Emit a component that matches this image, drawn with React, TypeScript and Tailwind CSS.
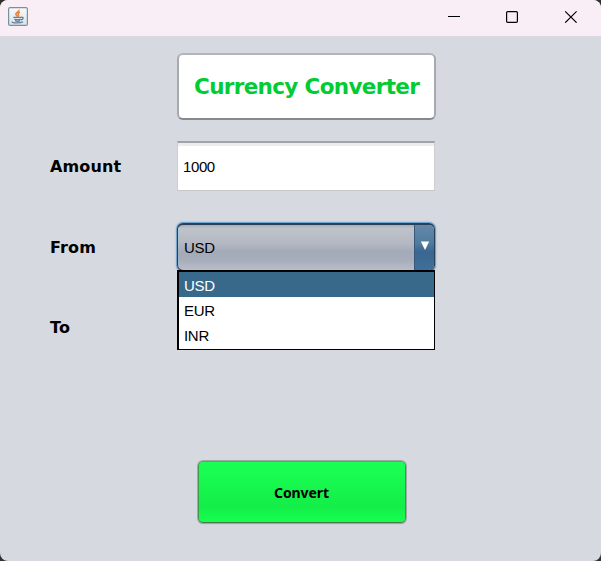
import React from "react";

const currencies = ["USD", "EUR", "INR"];

function JavaIcon() {
  return (
    <svg width="20" height="19" viewBox="0 0 20 19" className="block">
      <defs>
        <linearGradient id="tile" x1="0" y1="0" x2="0" y2="1">
          <stop offset="0" stopColor="#f8fafb" />
          <stop offset="1" stopColor="#dde2e5" />
        </linearGradient>
      </defs>
      <rect x="0.6" y="0.6" width="18.8" height="17.8" rx="1.5" fill="url(#tile)" stroke="#7591a2" strokeWidth="1.2" />
      <path d="M11 2.8c.6 2-3.6 2.6-3.2 4.6.2.9 1.6 1.5 1.9 2.3M12.1 5.3c-2 .8-2.6 1.5-1.7 2.5.5.6.1 1.2-.5 1.8" fill="none" stroke="#ec8137" strokeWidth="1.5" />
      <path d="M5.3 10.4h8M6.4 12.1c1.4.8 5 .8 6.4 0M7 13.6c1.3.7 4 .7 5.2 0M13.3 10.3c2.5-.6 2.4 2-.2 2.6M4.3 14.7c-1.2 1.5 8.5 1.7 10.7.1" fill="none" stroke="#5f829c" strokeWidth="1.3" />
    </svg>
  );
}

function TitleBar() {
  return (
    <header className="flex h-9 shrink-0 items-start justify-between bg-[#f9eef5] pl-2 pr-[24px]">
      <div className="pt-[7px]">
        <JavaIcon />
      </div>
      <div className="flex gap-[46px] pt-[10px]">
        <svg width="13" height="13" viewBox="0 0 13 13">
          <path d="M0 6.5h12" stroke="#000" />
        </svg>
        <svg width="13" height="13" viewBox="0 0 13 13" className="-ml-px">
          <rect x="0.6" y="1.6" width="10.8" height="10.8" rx="1.2" fill="none" stroke="#000" strokeWidth="1.2" />
        </svg>
        <svg width="13" height="13" viewBox="0 0 13 13" className="-ml-px">
          <path d="M1.2 1.3l11.4 11.4M12.6 1.3L1.2 12.7" stroke="#000" strokeWidth="1.2" />
        </svg>
      </div>
    </header>
  );
}

function Label({ children }: { children: React.ReactNode }) {
  return (
    <div className="w-[127px] shrink-0 pt-0.5 font-['DejaVu_Sans',sans-serif] text-base font-bold leading-6 tracking-[0.15px] text-black">
      {children}
    </div>
  );
}

function CurrencySelect() {
  return (
    <div className="relative w-[258px]">
      <div className="flex h-12 overflow-hidden rounded-[6px] border-x border-t-2 border-b border-[#2a4059] bg-[linear-gradient(#a7adb8_0,#bfc3ca_8%,#b4b8c2_40%,#a3aab8_60%,#a8aebb_80%,#b8bec9_100%)] shadow-[0_0_0_1px_#72a5cd,0_0_2px_1px_#8fb5d4]">
        <span className="flex flex-1 items-center pl-[6px] pt-px text-[15px] tracking-[-0.3px] text-black">USD</span>
        <span className="flex w-[20px] justify-center border-l border-[#35597b] bg-[linear-gradient(#6488aa_0,#507c9f_40%,#3a6691_60%,#416f9b_100%)] pt-4">
          <svg width="10" height="10" viewBox="0 0 10 10">
            <path d="M.8.5h8.4L5 9z" fill="#fff" />
          </svg>
        </span>
      </div>
      <ul className="absolute left-0 top-[47px] h-20 w-[258px] border-t-2 border-l-2 border-r border-b border-black bg-white text-[15px] leading-[25px] tracking-[-0.3px]">
        {currencies.map((currency, i) => (
          <li key={currency} className={i === 0 ? "h-[25px] bg-[#39698a] pl-[5px] pt-px text-white" : "h-[25px] pl-[5px] pt-px text-black"}>
            {currency}
          </li>
        ))}
      </ul>
    </div>
  );
}

export default function App() {
  return (
    <div className="h-[561px] w-[601px] bg-[#30302d]">
      <div className="flex h-full flex-col overflow-hidden rounded-[8px] bg-[#d6d9e0] font-['Liberation_Sans',Arial,sans-serif]">
        <TitleBar />
        <main className="flex flex-col pt-[17px]">
          <div className="ml-[177px] flex h-[67px] w-[259px] items-center rounded-[6px] border-2 border-t-[#b2b5ba] border-x-[#a6a9ae] border-b-[#85888d] bg-white pl-[15px] pt-0.5 font-['DejaVu_Sans',sans-serif] text-[21.5px] font-bold tracking-[-0.65px] text-[#00cc33]">
            <span className="whitespace-nowrap">Currency Converter</span>
          </div>
          <div className="mt-[21px] flex h-[50px] items-center pl-[50px]">
            <Label>Amount</Label>
            <div className="flex h-[50px] w-[258px] items-center border border-t-2 border-x-[#cdced2] border-b-[#c6c7ca] border-t-[#a2a3a6] bg-white pl-[5px] pt-px text-[15px] tracking-[-0.4px] text-black shadow-[inset_0_3px_1px_#ececec]">
              1000
            </div>
          </div>
          <div className="mt-8 flex h-12 items-center pl-[50px]">
            <Label>From</Label>
            <CurrencySelect />
          </div>
          <div className="mt-8 flex h-12 items-center pl-[50px]">
            <Label>To</Label>
          </div>
          <button className="ml-[198px] mt-[110px] flex h-[62px] w-[208px] items-center justify-center rounded-[5px] border border-t-[#5ca36c] border-x-[#3f9a50] border-b-[#417b4b] bg-[linear-gradient(#1aff53_0,#19fc52_20%,#15f14a_60%,#13ee48_75%,#18ff50_100%)] pt-0.5 pr-px font-['Noto_Sans',sans-serif] text-sm font-bold tracking-[-0.1px] text-black shadow-[0_0_0_1px_#a2a8a9,0_1px_1px_0_#8d9096]">
            Convert
          </button>
        </main>
      </div>
    </div>
  );
}
